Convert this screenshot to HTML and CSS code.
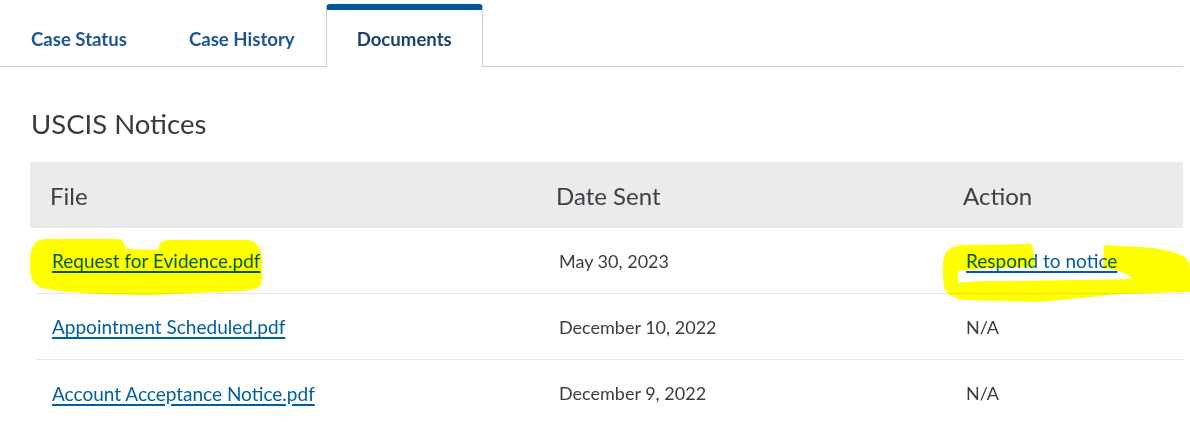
FILE: index.html
```html
<!DOCTYPE html>
<html lang="en">
<head>
<meta charset="utf-8">
<title>Documents</title>
<link rel="stylesheet" href="styles.css">
</head>
<body>
<div class="page">
  <nav class="tabs">
    <a class="tab" href="#">Case Status</a>
    <a class="tab" href="#">Case History</a>
    <a class="tab tab-active" href="#">Documents</a>
  </nav>

  <section class="notices">
    <h2 class="notices-title">USCIS Notices</h2>
    <div class="table">
      <div class="thead">
        <div class="th">File</div>
        <div class="th">Date Sent</div>
        <div class="th">Action</div>
      </div>
      <div class="tr">
        <div class="td"><a class="link" href="#">Request for Evidence.pdf</a></div>
        <div class="td">May 30, 2023</div>
        <div class="td"><a class="link" href="#">Respond to notice</a></div>
      </div>
      <div class="tr">
        <div class="td"><a class="link" href="#">Appointment Scheduled.pdf</a></div>
        <div class="td">December 10, 2022</div>
        <div class="td">N/A</div>
      </div>
      <div class="tr tr-last">
        <div class="td"><a class="link" href="#">Account Acceptance Notice.pdf</a></div>
        <div class="td">December 9, 2022</div>
        <div class="td">N/A</div>
      </div>
    </div>
  </section>

  <svg class="highlight" width="1190" height="422" viewBox="0 0 1190 422" aria-hidden="true">
    <path d="M30,265 C30,248 33,240 45,239 L118,239 C123,240 125,244 126,249 L158,250 C159,243 162,240 170,240 L248,240 C258,242 262,250 262,262 L262,279 C262,288 255,290 240,291 L150,295 C100,295 60,292 42,288 C33,285 30,278 30,265 Z"/>
    <path d="M943,266 C943,252 949,246 963,245 L1031,244 C1034,252 1035,260 1035,267 L990,268 L958,271 L958,290 L945,290 C943,284 943,275 943,266 Z"/>
    <path d="M945,286 C958,281 985,281 1010,281 L1132,279 L1190,281 L1190,291 C1170,293 1150,293 1120,294 L1040,302 L965,300 C952,298 945,294 945,286 Z"/>
    <path d="M1103,268 L1104,245 L1140,247 C1160,248 1178,252 1186,258 C1189,261 1190,264 1190,268 L1190,292 L1132,292 L1132,279 C1128,273 1115,269 1103,268 Z"/>
  </svg>
</div>
</body>
</html>
```

FILE: styles.css
```css
* {
  box-sizing: border-box;
}

html, body {
  margin: 0;
  padding: 0;
  background: #ffffff;
}

body {
  font-family: Lato, "Noto Sans", "Liberation Sans", sans-serif;
  color: #3d3d3d;
  width: 1190px;
  height: 422px;
  overflow: hidden;
}

.page {
  position: relative;
  width: 1190px;
  height: 422px;
}

.tabs {
  display: flex;
  align-items: flex-end;
  height: 67px;
  padding-top: 4px;
  width: 1183px;
  border-bottom: 1px solid #cccccc;
}

.tab {
  display: flex;
  align-items: center;
  height: 62px;
  padding: 7px 30px 0;
  font-size: 18.6px;
  font-weight: 700;
  color: #1f5595;
  text-decoration: none;
  border: 1px solid transparent;
  border-bottom: 0;
}

.tab-active {
  position: relative;
  top: 1px;
  height: 63px;
  padding-top: 1px;
  padding-bottom: 1px;
  color: #1d4271;
  background: #ffffff;
  border-color: #cccccc;
  border-top: 6px solid #00599c;
  border-radius: 4px 4px 0 0;
}

.notices {
  padding-left: 30px;
}

.notices-title {
  margin: 0;
  padding: 40px 0 0 1px;
  height: 95px;
  font-size: 27.5px;
  line-height: 34px;
  font-weight: 400;
  color: #3a3a3a;
}

.table {
  width: 1153px;
}

.thead {
  display: grid;
  grid-template-columns: 506px 407px 1fr;
  align-items: center;
  height: 66px;
  background: #ebebeb;
}

.th {
  padding-left: 20px;
  font-size: 24px;
  color: #3d4047;
}

.tr {
  display: grid;
  grid-template-columns: 507px 407px 1fr;
  align-items: center;
  height: 66px;
  margin-left: 6px;
  border-bottom: 1px solid #e6e6e6;
}

.tr:first-of-type {
  height: 65px;
}

.tr-last {
  border-bottom: 0;
}

.td {
  padding-left: 16px;
  font-size: 18px;
  color: #3d3d3d;
}

.link {
  font-size: 19px;
  color: #005ea2;
  text-decoration: underline;
  text-decoration-thickness: 2px;
  text-underline-offset: 3px;
}

.highlight {
  position: absolute;
  left: 0;
  top: 0;
  pointer-events: none;
  mix-blend-mode: multiply;
}

.highlight path {
  fill: #ffff00;
}
```
